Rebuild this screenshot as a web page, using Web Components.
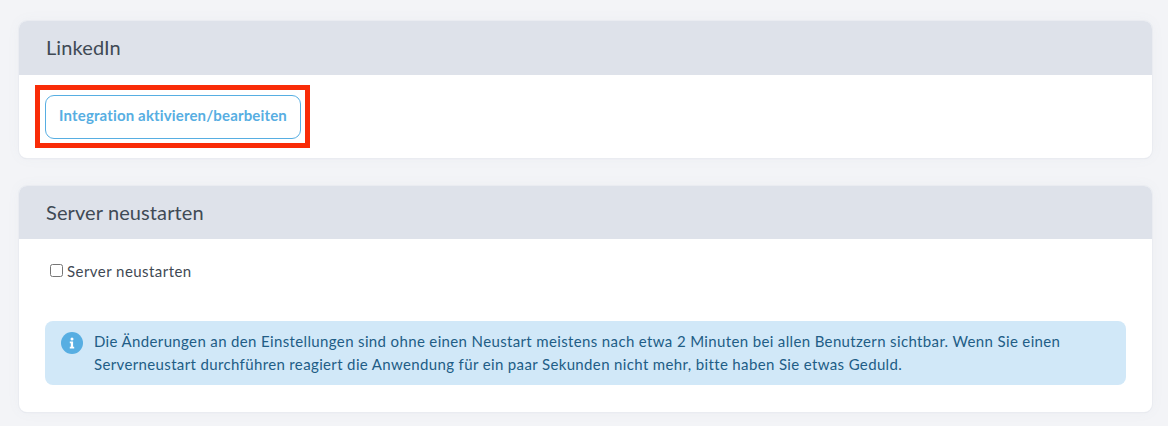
<!DOCTYPE html>
<html lang="de">
<head>
<meta charset="utf-8">
<title>Einstellungen</title>
<style>
  html, body { margin: 0; height: 426px; overflow: hidden; background: #f3f4f7; }
  body { font-family: Lato, "Noto Sans", sans-serif; color: #3f4954; }
  settings-page { --accent: #57aee2; }
</style>
</head>
<body>
<settings-page>
  <settings-card heading="LinkedIn" style="--head: 54px; --body-pad: 20px 26px 19px">
    <marked-button>Integration aktivieren/bearbeiten</marked-button>
  </settings-card>
  <settings-card heading="Server neustarten" style="--head: 53px; --body-pad: 23px 26px 27px">
    <check-row>Server neustarten</check-row>
    <info-alert>Die Änderungen an den Einstellungen sind ohne einen Neustart meistens nach etwa 2 Minuten bei allen Benutzern sichtbar. Wenn Sie einen Serverneustart durchführen reagiert die Anwendung für ein paar Sekunden nicht mehr, bitte haben Sie etwas Geduld.</info-alert>
  </settings-card>
</settings-page>

<script>
class SettingsPage extends HTMLElement {
  constructor() {
    super();
    this.attachShadow({ mode: 'open' }).innerHTML = `
    <style>
      :host {
        display: flex;
        flex-direction: column;
        gap: 28px;
        padding: 21px 16px 0 19px;
      }
    </style>
    <slot></slot>`;
  }
}

class SettingsCard extends HTMLElement {
  constructor() {
    super();
    this.attachShadow({ mode: 'open' }).innerHTML = `
    <style>
      :host {
        display: block;
        background: #fff;
        border-radius: 8px;
        overflow: hidden;
        box-shadow: 0 0 0 1px #eaecf1, 0 1px 1px #dfe2e9, 0 0 14px rgba(120, 130, 150, .05);
      }
      header {
        height: var(--head);
        box-sizing: border-box;
        display: flex;
        align-items: center;
        padding: 0 0 2px 27px;
        background: #dee2ea;
        font-size: 20px;
        letter-spacing: .1px;
        color: #404a55;
      }
      .body { padding: var(--body-pad); }
    </style>
    <header></header>
    <div class="body"><slot></slot></div>`;
    this.shadowRoot.querySelector('header').textContent = this.getAttribute('heading');
  }
}

class MarkedButton extends HTMLElement {
  constructor() {
    super();
    this.attachShadow({ mode: 'open' }).innerHTML = `
    <style>
      :host { display: inline-block; position: relative; vertical-align: top; }
      button {
        display: block;
        width: 256px;
        height: 44px;
        padding: 0 0 4px;
        background: #fff;
        border: 1px solid var(--accent);
        border-radius: 9px;
        color: var(--accent);
        font: 700 15px Lato, "Noto Sans", sans-serif;
        letter-spacing: .15px;
      }
      .mark {
        position: absolute;
        inset: -10px -9px -9px -10px;
        border: 5px solid #f92c07;
        pointer-events: none;
      }
    </style>
    <button><slot></slot></button>
    <div class="mark"></div>`;
  }
}

class CheckRow extends HTMLElement {
  constructor() {
    super();
    this.attachShadow({ mode: 'open' }).innerHTML = `
    <style>
      :host {
        display: flex;
        align-items: center;
        gap: 4px;
        height: 20px;
        padding-left: 5px;
        font-size: 15px;
        letter-spacing: .45px;
        color: #3f4954;
      }
      input { width: 13px; height: 13px; margin: 0 0 3px; }
      span { margin-top: -2px; }
    </style>
    <input type="checkbox"><span><slot></slot></span>`;
  }
}

class InfoAlert extends HTMLElement {
  constructor() {
    super();
    this.attachShadow({ mode: 'open' }).innerHTML = `
    <style>
      :host {
        display: flex;
        gap: 11px;
        margin-top: 39px;
        padding: 9px 20px 9px 16px;
        background: #d1e8f8;
        border-radius: 8px;
        font-size: 15px;
        line-height: 23px;
        letter-spacing: .36px;
        color: #215d86;
      }
      svg { flex: none; width: 22px; height: 22px; margin-top: 2px; }
    </style>
    <svg viewBox="0 0 22 22" aria-hidden="true">
      <circle cx="11" cy="11" r="11" fill="#57aee2"/>
      <circle cx="11" cy="6.9" r="1.5" fill="#fff"/>
      <path d="M8.8 9.6h3.3v5.2h1.1v1.6H8.8v-1.6h1v-3.6h-1z" fill="#fff"/>
    </svg>
    <div><slot></slot></div>`;
  }
}

customElements.define('settings-page', SettingsPage);
customElements.define('settings-card', SettingsCard);
customElements.define('marked-button', MarkedButton);
customElements.define('check-row', CheckRow);
customElements.define('info-alert', InfoAlert);
</script>
</body>
</html>
